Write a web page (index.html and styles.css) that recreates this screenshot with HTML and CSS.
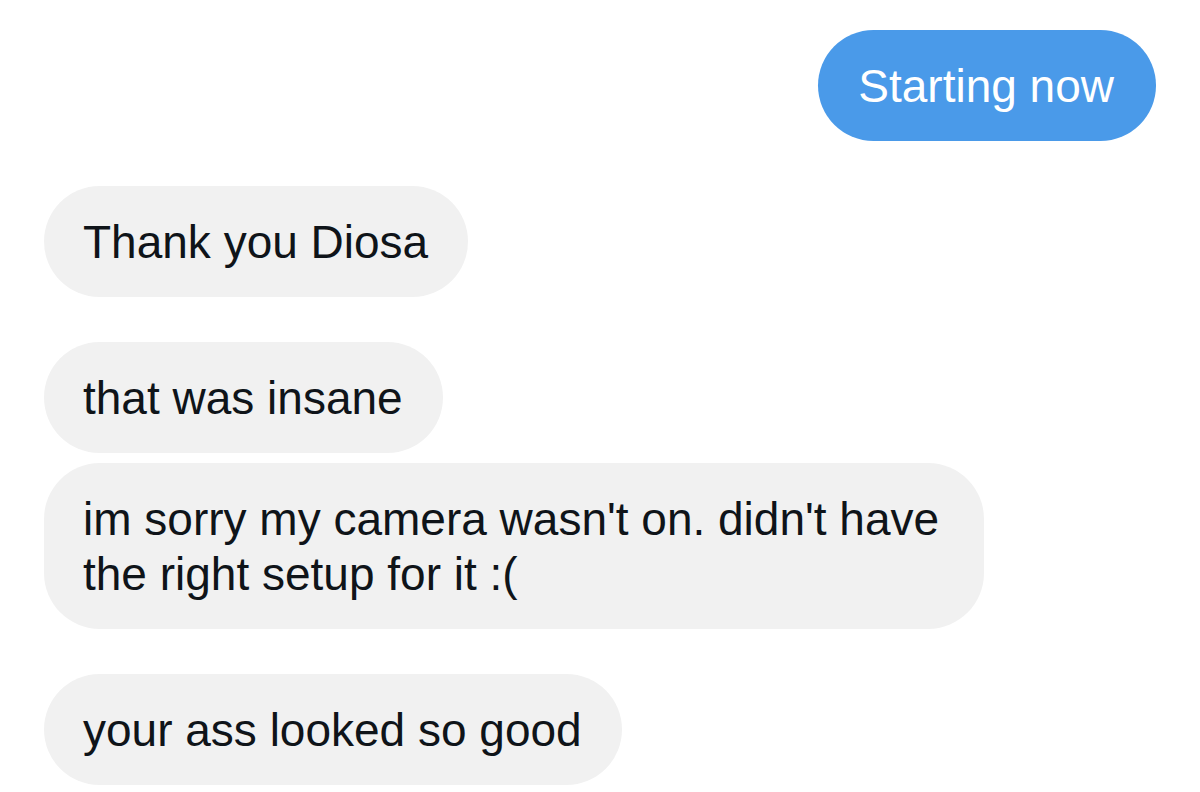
FILE: index.html
```html
<!DOCTYPE html>
<html lang="en">
<head>
<meta charset="utf-8">
<title>Messages</title>
<link rel="stylesheet" href="styles.css">
</head>
<body>
  <main class="thread">
    <div class="msg msg-out">Starting now</div>
    <div class="msg msg-in">Thank you Diosa</div>
    <div class="group">
      <div class="msg msg-in">that was insane</div>
      <div class="msg msg-in">im sorry my camera wasn't on. didn't have the right setup for it :(</div>
    </div>
    <div class="msg msg-in">your ass looked so good</div>
  </main>
</body>
</html>
```

FILE: styles.css
```css
html, body {
  margin: 0;
  padding: 0;
  background: #ffffff;
}

.thread {
  display: flex;
  flex-direction: column;
  gap: 45px;
  padding: 30px 44px 0 44px;
  font-family: "Liberation Sans", Arial, sans-serif;
  font-size: 46px;
  line-height: 55px;
}

.group {
  display: flex;
  flex-direction: column;
  gap: 10px;
}

.msg {
  box-sizing: border-box;
  width: fit-content;
  max-width: 940px;
  padding: 29px 40px 27px 39px;
  border-radius: 56px;
}

.msg-out {
  align-self: flex-end;
  background: #4a9ae9;
  color: #ffffff;
  padding-left: 40px;
  padding-right: 42px;
}

.msg-in {
  align-self: flex-start;
  background: #f1f1f1;
  color: #0f1419;
}
```
